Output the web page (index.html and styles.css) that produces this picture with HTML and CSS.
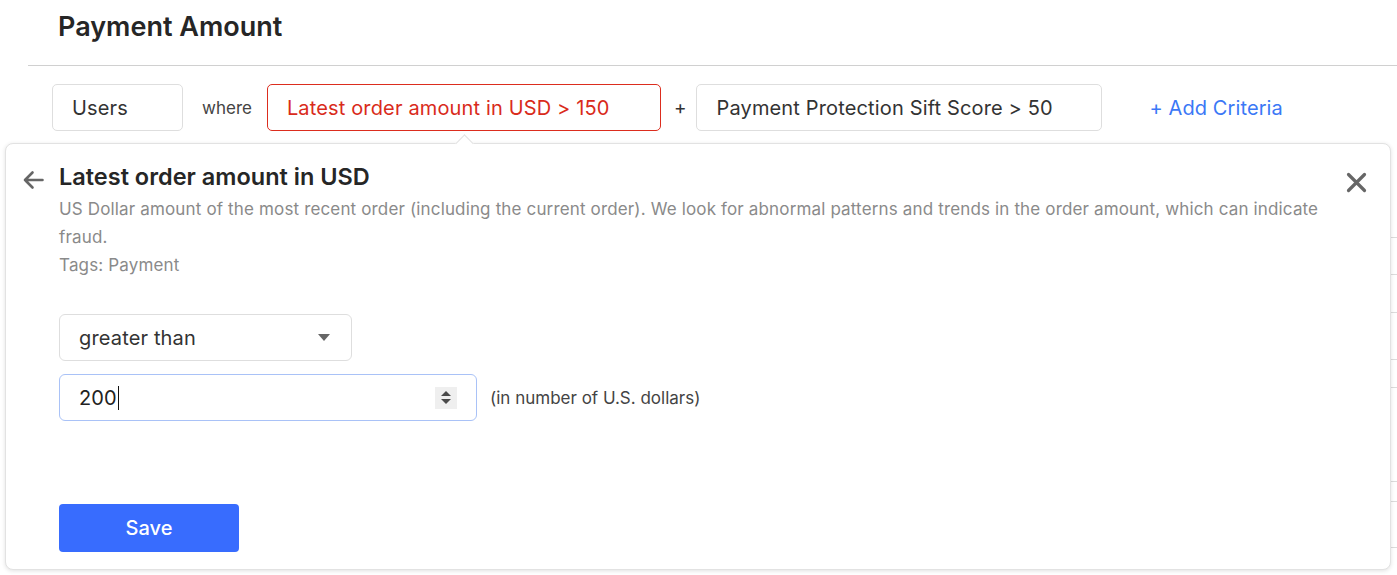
FILE: index.html
```html
<!DOCTYPE html>
<html>
<head>
<meta charset="utf-8">
<link rel="stylesheet" href="styles.css">
</head>
<body>
<div class="page">
  <div class="header">
    <h1 class="title">Payment Amount</h1>
  </div>
  <div class="filters">
    <div class="chip chip-users">Users</div>
    <span class="where">where</span>
    <div class="chip chip-active">Latest order amount in USD &gt; 150</div>
    <span class="plus">+</span>
    <div class="chip chip-score">Payment Protection Sift Score &gt; 50</div>
    <span class="add">+ Add Criteria</span>
  </div>
  <div class="bg-table">
    <div class="bg-row r1"></div>
    <div class="bg-row r2"></div>
    <div class="bg-row r3"></div>
    <div class="bg-row r4"></div>
    <div class="bg-row r5"></div>
    <div class="bg-row r6"></div>
    <div class="bg-row r7"></div>
    <div class="bg-row r8"></div>
  </div>

  <div class="popup">
    <div class="caret"></div>
    <div class="head">
      <svg class="back" width="22" height="20" viewBox="0 0 22 20"><path d="M20.5 10H3M10.5 2.5L3 10l7.5 7.5" fill="none" stroke="#666" stroke-width="2.6" stroke-linecap="round" stroke-linejoin="round"/></svg>
      <div class="info">
        <div class="p-title">Latest order amount in USD</div>
        <div class="desc">US Dollar amount of the most recent order (including the current order). We look for abnormal patterns and trends in the order amount, which can indicate fraud.</div>
        <div class="desc">Tags: Payment</div>
      </div>
      <svg class="close" width="21" height="21" viewBox="0 0 21 21"><path d="M2.5 2.5l16 16M18.5 2.5l-16 16" fill="none" stroke="#666" stroke-width="3.2" stroke-linecap="round"/></svg>
    </div>
    <div class="form">
      <div class="select">
        <span>greater than</span>
        <span class="tri"></span>
      </div>
      <div class="num-row">
        <div class="num">
          <span class="val">200</span><span class="cursor"></span>
          <span class="spin"><span class="up"></span><span class="down"></span></span>
        </div>
        <span class="unit">(in number of U.S. dollars)</span>
      </div>
      <button class="save">Save</button>
    </div>
  </div>
</div>
</body>
</html>
```

FILE: styles.css
```css
* { box-sizing: border-box; }
html, body { margin: 0; padding: 0; background: #fff; }
body {
  font-family: Inter, "Noto Sans", "Liberation Sans", sans-serif;
  color: #333;
  width: 1397px;
  height: 575px;
  overflow: hidden;
}
.page { position: relative; height: 575px; }

.header {
  margin-left: 28px;
  padding: 11px 0 22px 30px;
  border-bottom: 1px solid #d0d0d0;
}
.title {
  margin: 0;
  font-size: 27px;
  line-height: 32px;
  font-weight: 600;
  color: #262626;
}

.filters {
  display: flex;
  align-items: center;
  padding-left: 52px;
  margin-top: 18px;
  height: 47px;
}
.chip {
  height: 47px;
  border: 1px solid #dedede;
  border-radius: 5px;
  display: flex;
  align-items: center;
  padding-left: 19px;
  font-size: 20px;
  letter-spacing: 0.15px;
  color: #333;
  white-space: nowrap;
}
.chip-users { width: 131px; }
.where { font-size: 17px; color: #444; margin: 0 15px 0 19px; }
.chip-active {
  width: 394px;
  border-color: #dc2d1e;
  color: #d92b1b;
}
.plus { font-size: 19px; color: #333; margin: 0 10px 0 13px; }
.chip-score { width: 406px; }
.add { font-size: 20px; letter-spacing: 0.1px; color: #3b78f6; margin-left: 47px; }

.bg-table { margin: 14px 0 0 28px; }
.bg-row { border-bottom: 1px solid #dcdcdc; }
.r1 { height: 93px; }
.r2 { height: 37px; }
.r3 { height: 38px; }
.r4 { height: 47px; }
.r5 { height: 28px; }
.r6 { height: 94px; }
.r7 { height: 20px; }
.r8 { height: 46px; }

.popup {
  position: absolute;
  left: 5px;
  top: 143px;
  width: 1386px;
  height: 427px;
  background: #fff;
  border: 1px solid #e2e2e2;
  border-radius: 8px;
  box-shadow: 0 1px 4px rgba(0,0,0,0.12);
  padding: 18px 23px 0 16px;
}
.caret {
  position: absolute;
  top: -7px;
  left: 452px;
  width: 13px;
  height: 13px;
  background: #fff;
  border-left: 1px solid #e2e2e2;
  border-top: 1px solid #e2e2e2;
  transform: rotate(45deg);
}
.head { display: flex; align-items: flex-start; }
.back { flex: none; margin-top: 8px; margin-right: 15px; }
.info { flex: 1; padding-right: 16px; }
.p-title {
  font-size: 23.5px;
  line-height: 30px;
  font-weight: 600;
  color: #262626;
  margin-bottom: 3px;
}
.desc { font-size: 17px; line-height: 28px; color: #8a8a8a; letter-spacing: 0.15px; }
.close { flex: none; margin-top: 10px; }

.form { margin-left: 37px; margin-top: 35px; }
.select {
  width: 293px;
  height: 47px;
  border: 1px solid #dedede;
  border-radius: 6px;
  display: flex;
  align-items: center;
  justify-content: space-between;
  padding: 0 21px 0 19px;
  font-size: 20px;
  letter-spacing: 0.15px;
  color: #333;
}
.tri {
  width: 0; height: 0;
  border-left: 6px solid transparent;
  border-right: 6px solid transparent;
  border-top: 7px solid #666;
}
.num-row { display: flex; align-items: center; margin-top: 13px; }
.num {
  width: 418px;
  height: 47px;
  border: 1px solid #a9c2f7;
  border-radius: 6px;
  display: flex;
  align-items: center;
  padding: 0 19px 0 19px;
  font-size: 20px;
  letter-spacing: 0.15px;
  color: #222;
}
.cursor { width: 1px; height: 24px; background: #111; margin-left: 1px; }
.spin {
  margin-left: auto;
  width: 22px;
  height: 22px;
  background: #efefef;
  display: flex;
  flex-direction: column;
  align-items: center;
  justify-content: center;
  gap: 3px;
}
.up {
  width: 0; height: 0;
  border-left: 5px solid transparent;
  border-right: 5px solid transparent;
  border-bottom: 5px solid #4a4a4a;
}
.down {
  width: 0; height: 0;
  border-left: 5px solid transparent;
  border-right: 5px solid transparent;
  border-top: 5px solid #4a4a4a;
}
.unit { font-size: 17px; color: #444; margin-left: 13px; }
.save {
  display: block;
  margin-top: 83px;
  width: 180px;
  height: 48px;
  border: none;
  border-radius: 4px;
  background: #386cfe;
  color: #fff;
  font-family: inherit;
  font-size: 20px;
  font-weight: 500;
}
```
